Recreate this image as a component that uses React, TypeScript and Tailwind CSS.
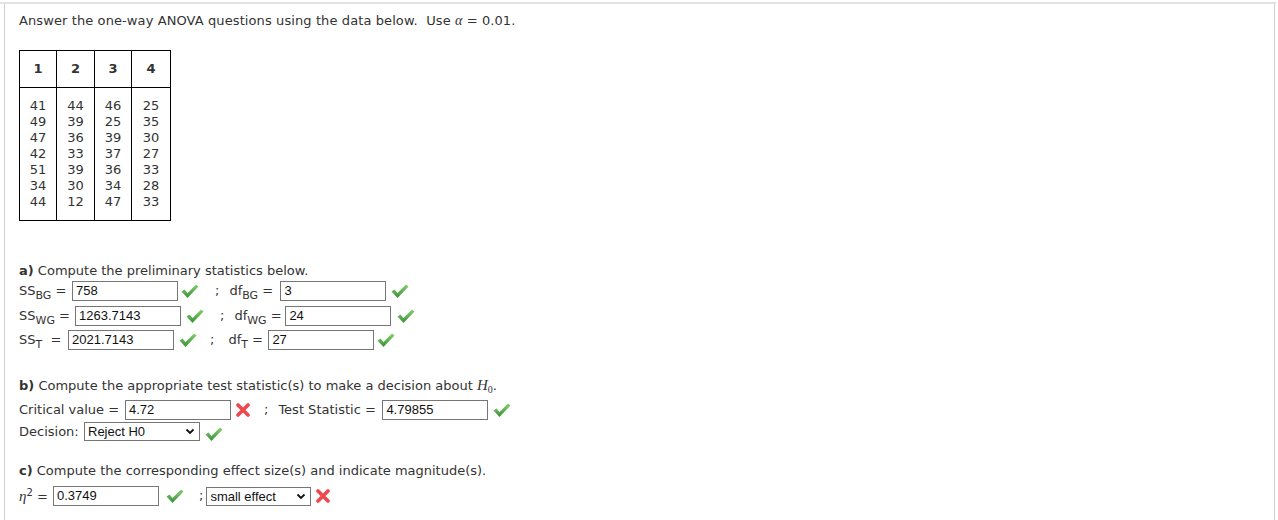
import React from 'react';

const Check: React.FC<{ className?: string }> = ({ className = '' }) => (
  <svg className={`shrink-0 ${className}`} width="18" height="15" viewBox="0 0 18 15">
    <defs>
      <linearGradient id="chk" x1="0" y1="0" x2="0" y2="1">
        <stop offset="0" stopColor="#86d16f" />
        <stop offset="1" stopColor="#3b8f3b" />
      </linearGradient>
    </defs>
    <polygon points="0.5,7.5 3.5,5.5 6.5,9 15,0.5 17.5,2.5 6.5,14" fill="url(#chk)" />
  </svg>
);

const Cross: React.FC<{ className?: string }> = ({ className = '' }) => (
  <svg className={`shrink-0 ${className}`} width="14" height="14" viewBox="0 0 14 14">
    <path d="M2 2 L12 12 M12 2 L2 12" stroke="#f0474c" strokeWidth="3.6" strokeLinecap="round" />
  </svg>
);

const Field: React.FC<{ value: string; className?: string }> = ({ value, className = '' }) => (
  <div
    className={`h-[20px] w-[106px] border border-[#767676] px-[3px] text-[13px] leading-[18px] text-[#111] ${className}`}
    style={{ fontFamily: '"Liberation Sans", Arial, sans-serif' }}
  >
    {value}
  </div>
);

const Select: React.FC<{ value: string; className?: string }> = ({ value, className = '' }) => (
  <div
    className={`flex h-[19px] items-center justify-between border border-[#767676] pl-[3px] pr-[4px] text-[13px] text-[#111] ${className}`}
    style={{ fontFamily: '"Liberation Sans", Arial, sans-serif' }}
  >
    <span className="leading-[17px]">{value}</span>
    <svg width="10" height="7" viewBox="0 0 10 7">
      <path d="M1.5 1.5 L5 5 L8.5 1.5" stroke="#111" strokeWidth="1.8" fill="none" />
    </svg>
  </div>
);

// lowered index as in SS_BG, df_T
const Sub: React.FC<{ children: React.ReactNode }> = ({ children }) => (
  <sub className="bottom-[-4px] text-[11px]">{children}</sub>
);

const columns = [
  ['41', '49', '47', '42', '51', '34', '44'],
  ['44', '39', '36', '33', '39', '30', '12'],
  ['46', '25', '39', '37', '36', '34', '47'],
  ['25', '35', '30', '27', '33', '28', '33'],
];
const colWidths = ['w-[37px]', 'w-[38px]', 'w-[37px]', 'w-[39px]'];

const App: React.FC = () => {
  return (
    <div
      className="min-h-[520px] bg-white pt-[2px] text-[13px] text-[#333]"
      style={{ fontFamily: '"DejaVu Sans", Verdana, sans-serif' }}
    >
      <div className="w-[1276px] border-t-2 border-[#e2e2e2]">
        <div className="ml-[4px] mr-[1px] min-h-[516px] border-x border-[#cfcfcf] pl-[14px] pt-[9px]">
          <div className="leading-[16px] tracking-[0.1px]">
            Answer the one-way ANOVA questions using the data below.&nbsp; Use{' '}
            <span className="italic text-[14px]" style={{ fontFamily: '"Liberation Serif", serif' }}>α</span> = 0.01.
          </div>

          {/* data table */}
          <table className="mt-[21px] border-collapse border border-black">
            <thead>
              <tr>
                {['1', '2', '3', '4'].map((h, i) => (
                  <th key={h} className={`${colWidths[i]} h-[37px] border border-black p-0 text-center font-bold`}>
                    {h}
                  </th>
                ))}
              </tr>
            </thead>
            <tbody>
              <tr>
                {columns.map((col, i) => (
                  <td key={i} className={`${colWidths[i]} border border-black p-0 pt-[10px] pb-[10px] text-center leading-[16px]`}>
                    {col.map((v, j) => (
                      <div key={j}>{v}</div>
                    ))}
                  </td>
                ))}
              </tr>
            </tbody>
          </table>

          {/* part a */}
          <div className="mt-[42px] leading-[16px]">
            <b>a)</b> Compute the preliminary statistics below.
          </div>
          <div className="mt-[2px] flex h-[20px] items-center">
            <span className="w-[53px]">SS<Sub>BG</Sub> =</span>
            <Field value="758" />
            <Check className="ml-[3px]" />
            <span className="ml-[16px]">;</span>
            <span className="ml-[10px] w-[51px]">df<Sub>BG</Sub> =</span>
            <Field value="3" />
            <Check className="ml-[5px]" />
          </div>
          <div className="mt-[5px] flex h-[20px] items-center">
            <span className="w-[56px]">SS<Sub>WG</Sub> =</span>
            <Field value="1263.7143" />
            <Check className="ml-[5px]" />
            <span className="ml-[16px]">;</span>
            <span className="ml-[10px] w-[51px]">df<Sub>WG</Sub> =</span>
            <Field value="24" />
            <Check className="ml-[6px]" />
          </div>
          <div className="mt-[4px] flex h-[20px] items-center">
            <span className="w-[49px]">SS<Sub>T</Sub>&nbsp; =</span>
            <Field value="2021.7143" />
            <Check className="ml-[5px]" />
            <span className="ml-[13px]">;</span>
            <span className="ml-[14px] w-[40px]">df<Sub>T</Sub> =</span>
            <Field value="27" />
            <Check className="ml-[3px]" />
          </div>

          {/* part b */}
          <div className="mt-[27px] leading-[16px]">
            <b>b)</b> Compute the appropriate test statistic(s) to make a decision about{' '}
            <span className="italic text-[15px]" style={{ fontFamily: '"Liberation Serif", serif' }}>
              H<sub className="bottom-[-3px] text-[10px] not-italic">0</sub>
            </span>
            .
          </div>
          <div className="mt-[6px] flex h-[20px] items-center">
            <span className="w-[106px]">Critical value =</span>
            <Field value="4.72" />
            <Cross className="ml-[5px]" />
            <span className="ml-[14px]">;</span>
            <span className="ml-[10px] w-[104px]">Test Statistic =</span>
            <Field value="4.79855" />
            <Check className="ml-[5px]" />
          </div>
          <div className="mt-[2px] flex h-[19px] items-center">
            <span className="w-[65px]">Decision:</span>
            <Select value="Reject H0" className="w-[116px]" />
            <Check className="ml-[5px] mt-[6px]" />
          </div>

          {/* part c */}
          <div className="mt-[22px] leading-[16px]">
            <b>c)</b> Compute the corresponding effect size(s) and indicate magnitude(s).
          </div>
          <div className="mt-[7px] flex h-[20px] items-center">
            <span className="w-[34px]">
              <span className="italic text-[15px]" style={{ fontFamily: '"Liberation Serif", serif' }}>η</span>
              <sup className="text-[10px]">2</sup> =
            </span>
            <Field value="0.3749" className="w-[105px]" />
            <Check className="ml-[7px]" />
            <span className="ml-[15px]">;</span>
            <Select value="small effect" className="ml-[3px] w-[105px]" />
            <Cross className="ml-[5px]" />
          </div>
        </div>
      </div>
    </div>
  );
};

export default App;
